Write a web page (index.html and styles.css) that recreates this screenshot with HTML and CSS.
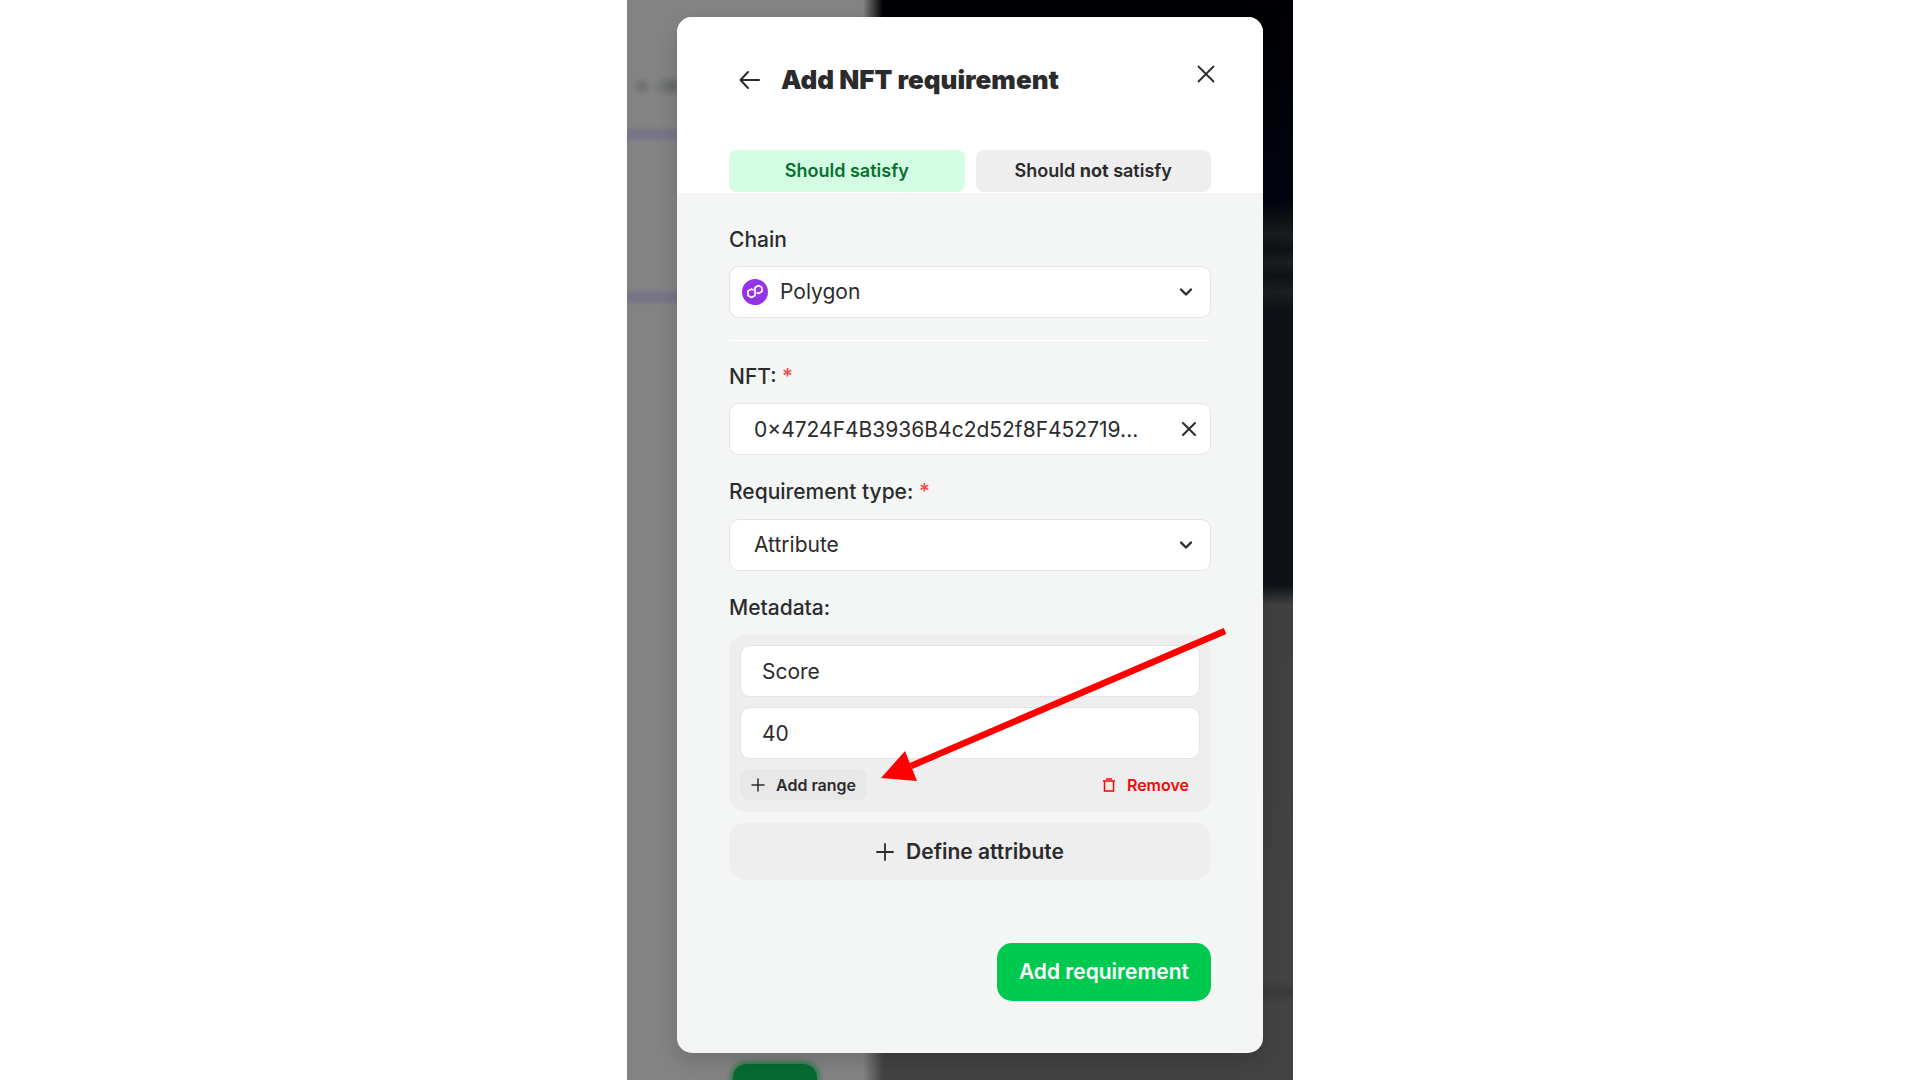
FILE: index.html
```html
<!DOCTYPE html>
<html lang="en">
<head>
<meta charset="utf-8">
<meta name="viewport" content="width=device-width, initial-scale=1">
<title>Add NFT requirement</title>
<link rel="stylesheet" href="styles.css">
</head>
<body>
<main class="stage">
  <section class="modal" role="dialog" aria-labelledby="modal-title">
    <header class="modal-header">
      <div class="title-row">
        <button class="icon-button" type="button" aria-label="Back">
          <svg width="22" height="20" viewBox="0 0 22 20" fill="none" stroke="currentColor" stroke-width="2" stroke-linecap="round" stroke-linejoin="round"><path d="M20 10H1.500M9 2L1.500 10l7.500 8"/></svg>
        </button>
        <h1 class="title" id="modal-title">Add NFT requirement</h1>
        <button class="icon-button close" type="button" aria-label="Close">
          <svg width="18" height="18" viewBox="0 0 18 18" fill="none" stroke="currentColor" stroke-width="1.800" stroke-linecap="round"><path d="M1.500 1.500l15 15M16.500 1.500l-15 15"/></svg>
        </button>
      </div>
      <div class="tabs">
        <button class="tab tab-active" type="button">Should satisfy</button>
        <button class="tab" type="button"><span>Should <b>not</b> satisfy</span></button>
      </div>
    </header>
    <form class="modal-body">
      <div class="field">
        <label class="label" for="chain">Chain</label>
        <div class="control">
          <select class="input input-with-logo" id="chain"><option>Polygon</option></select>
          <svg class="control-logo" width="26" height="26" viewBox="0 0 26 26" fill="none"><circle cx="13" cy="13" r="13" fill="#9333e5"/><path d="M11.500 11.200L9.500 10 6 12v4.500l3.500 2 3.500-2v-8l3.500-2 3.500 2v4l-3.500 2-2-1.100" stroke="#fff" stroke-width="1.700" stroke-linejoin="round"/></svg>
          <svg class="control-icon" width="14" height="10" viewBox="0 0 14 10" fill="none" stroke="currentColor" stroke-width="2.400" stroke-linecap="round" stroke-linejoin="round"><path d="M2 2.500l5 5 5-5"/></svg>
        </div>
      </div>
      <hr class="divider">
      <div class="field">
        <label class="label" for="nft">NFT: <span class="required">*</span></label>
        <div class="control">
          <input class="input" id="nft" type="text" value="0×4724F4B3936B4c2d52f8F452719...">
          <button class="icon-button control-icon clear" type="button" aria-label="Clear NFT">
            <svg width="16" height="16" viewBox="0 0 16 16" fill="none" stroke="currentColor" stroke-width="2" stroke-linecap="round"><path d="M2 2l12 12M14 2L2 14"/></svg>
          </button>
        </div>
      </div>
      <div class="field">
        <label class="label" for="type">Requirement type: <span class="required">*</span></label>
        <div class="control">
          <select class="input" id="type"><option>Attribute</option></select>
          <svg class="control-icon" width="14" height="10" viewBox="0 0 14 10" fill="none" stroke="currentColor" stroke-width="2.400" stroke-linecap="round" stroke-linejoin="round"><path d="M2 2.500l5 5 5-5"/></svg>
        </div>
      </div>
      <div class="field">
        <label class="label" for="meta-key">Metadata:</label>
        <div class="metadata">
          <input class="input" id="meta-key" type="text" value="Score">
          <input class="input" type="text" value="40" aria-label="Metadata value">
          <div class="metadata-actions">
            <button class="small-button" type="button">
              <svg width="14" height="14" viewBox="0 0 14 14" fill="none" stroke="currentColor" stroke-width="1.500" stroke-linecap="round"><path d="M7 1v12M1 7h12"/></svg>
              Add range
            </button>
            <button class="small-button remove" type="button">
              <svg width="14" height="14" viewBox="0 0 14 14" fill="none" stroke="currentColor" stroke-width="1.500"><path d="M1 3h12M4 1h6M2.500 3v10h9V3"/></svg>
              Remove
            </button>
          </div>
          <svg class="pointer" width="348" height="158" viewBox="0 0 348 158" fill="#f00"><path d="M0 151L24 124l12 30z"/><path d="M30 139L344 4" stroke="#f00" stroke-width="6.500"/></svg>
        </div>
        <button class="define" type="button">
          <svg width="18" height="18" viewBox="0 0 18 18" fill="none" stroke="currentColor" stroke-width="1.800" stroke-linecap="round"><path d="M9 1v16M1 9h16"/></svg>
          Define attribute
        </button>
      </div>
      <footer class="modal-footer">
        <button class="submit" type="submit">Add requirement</button>
      </footer>
    </form>
  </section>
</main>
</body>
</html>
```
FILE: styles.css
```css
* {
  box-sizing: border-box;
}

body {
  margin: 0;
  background: #fff;
  color: #2b2b2d;
  font-family: Inter, "Liberation Sans", sans-serif;
}

button,
input,
select {
  margin: 0;
  border: 0;
  color: inherit;
  font-family: inherit;
}

button {
  padding: 0;
  background: none;
  cursor: pointer;
}

svg {
  display: block;
  flex: none;
}

/* Dimmed, blurred page that sits behind the dialog */
.stage {
  position: relative;
  overflow: hidden;
  max-width: 666px;
  min-height: 100vh;
  margin: 0 auto;
  padding: 17px 30px 27px 50px;
  background:
    radial-gradient(circle at 15px 86px, #6e736f, transparent 10px),
    radial-gradient(ellipse 20px 12px at 45px 86px, #636965, transparent),
    linear-gradient(transparent 126px, #777588 131px, #777588 137px, transparent 143px, transparent 288px, #777588 294px, #777588 300px, transparent 306px) 0 0 / 50px 100% no-repeat,
    linear-gradient(90deg, #838383 236px, transparent 256px),
    linear-gradient(#000104, #020410 200px, #0e1216 220px, #1a1c1f 235px, #0e1216 250px, #1c1e21 262px, #0e1216 275px, #1c1e21 292px, #0e1216 310px, #0e1216 585px, #404040 605px, #434343 980px, #3a3a3a 992px, #434343 1004px);
}

.stage::after {
  content: "";
  position: absolute;
  bottom: -40px;
  left: 106px;
  width: 84px;
  height: 56px;
  border-radius: 14px;
  background: #066b31;
  box-shadow: 0 0 5px 3px #377c52;
}

.modal {
  position: relative;
  z-index: 1;
  overflow: hidden;
  border-radius: 15px;
  background: #f4f6f6;
  box-shadow: 0 8px 20px rgba(0, 0, 0, 0.15);
}

.modal-header {
  padding: 43px 52px 1px;
  background: #fff;
}

.title-row {
  display: flex;
  align-items: center;
  gap: 20px;
  height: 40px;
  padding: 0 0 0 10px;
}

.title {
  flex: 1;
  margin: 0;
  font-size: 26px;
  font-weight: 900;
  line-height: 40px;
}

.close {
  align-self: flex-start;
  padding: 5px 0 0;
  margin-right: -4px;
}

.tabs {
  display: grid;
  grid-template-columns: 1fr 1fr;
  gap: 11px;
  margin-top: 50px;
}

.tab {
  height: 42px;
  border-radius: 8px;
  background: #eee;
  font-size: 18px;
  font-weight: 600;
  line-height: 24px;
}

.tab b {
  font-weight: 700;
}

.tab-active {
  background: #d3fde4;
  color: #08702f;
}

.modal-body {
  display: flex;
  flex-direction: column;
  gap: 24px;
  padding: 34px 52px 52px;
}

.field {
  display: flex;
  flex-direction: column;
}

.label {
  margin-bottom: 13px;
  font-size: 21px;
  font-weight: 500;
  line-height: 26px;
}

.required {
  color: #fb4646;
}

.divider {
  width: 100%;
  height: 1px;
  margin: -2px 0 -1px;
  border: 0;
  background: #fff;
}

.control {
  display: grid;
  align-items: center;
}

.control > * {
  grid-area: 1 / 1;
}

.input {
  width: 100%;
  height: 52px;
  padding: 0 48px 0 24px;
  border: 1px solid #e4e4e7;
  border-radius: 10px;
  background: #fff;
  font-size: 21px;
  font-weight: 400;
  line-height: 26px;
  appearance: none;
}

.input-with-logo {
  padding-left: 50px;
}

.control-logo {
  margin-left: 13px;
  pointer-events: none;
}

.control-icon {
  justify-self: end;
  margin-right: 18px;
  pointer-events: none;
}

.clear {
  margin-right: 14px;
  pointer-events: auto;
}

.field + .field .label {
  margin-bottom: 14px;
}

.metadata {
  position: relative;
  display: flex;
  flex-direction: column;
  gap: 10px;
  padding: 10px 11px 12px;
  border-radius: 16px;
  background: #eee;
}

.metadata .input {
  padding: 0 21px;
}

.metadata-actions {
  display: flex;
  justify-content: space-between;
}

.small-button {
  display: flex;
  align-items: center;
  gap: 11px;
  height: 31px;
  padding: 0 11px;
  border-radius: 9px;
  background: #e8e8e8;
  font-size: 16px;
  font-weight: 600;
  line-height: 20px;
}

.remove {
  background: none;
  color: #fa0505;
}

/* Callout arrow drawn over the metadata box */
.pointer {
  position: absolute;
  top: -8px;
  left: 152px;
  pointer-events: none;
}

.define {
  display: flex;
  align-items: center;
  justify-content: center;
  gap: 12px;
  height: 57px;
  margin-top: 11px;
  border-radius: 16px;
  background: #eee;
  font-size: 21px;
  font-weight: 600;
  line-height: 26px;
}

.modal-footer {
  display: flex;
  justify-content: flex-end;
  margin-top: 39px;
}

.submit {
  height: 58px;
  padding: 0 22px;
  border-radius: 15px;
  background: #00c94f;
  color: #fff;
  font-size: 21px;
  font-weight: 600;
  line-height: 26px;
}
```
